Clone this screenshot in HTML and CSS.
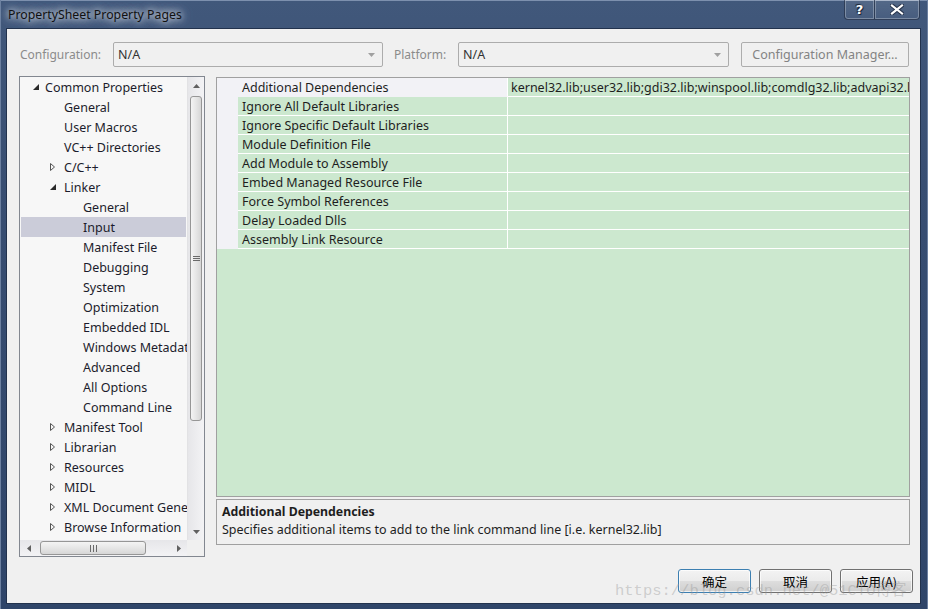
FILE: index.html
```html
<!DOCTYPE html>
<html>
<head>
<meta charset="utf-8">
<title>PropertySheet Property Pages</title>
<link rel="stylesheet" href="styles.css">
</head>
<body>
<div class="window">
  <div class="titlebar">
    <span class="title">PropertySheet Property Pages</span>
    <div class="caption-btns">
      <div class="cbtn help">?</div>
      <div class="cbtn close">
        <svg width="14" height="11" viewBox="0 0 14 11"><path d="M2 1.5 L12 9.5 M12 1.5 L2 9.5" stroke="#27344c" stroke-width="4.2" stroke-linecap="square"/><path d="M2 1.5 L12 9.5 M12 1.5 L2 9.5" stroke="#ffffff" stroke-width="2.2" stroke-linecap="square"/></svg>
      </div>
    </div>
  </div>
  <div class="client">
    <div class="config-row">
      <span class="lbl lbl-config">Configuration:</span>
      <div class="combo combo-config"><span class="combo-text">N/A</span><svg class="combo-arrow" width="7" height="4" viewBox="0 0 7 4"><path d="M0 0 H7 L3.5 4 Z" fill="#a0a0a0"/></svg></div>
      <span class="lbl lbl-platform">Platform:</span>
      <div class="combo combo-platform"><span class="combo-text">N/A</span><svg class="combo-arrow" width="7" height="4" viewBox="0 0 7 4"><path d="M0 0 H7 L3.5 4 Z" fill="#a0a0a0"/></svg></div>
      <div class="btn-mgr">Configuration Manager...</div>
    </div>

    <div class="main">
      <div class="tree">
        <div class="tree-items">
          <div class="trow d0"><span class="tw"><svg width="6" height="6" viewBox="0 0 6 6"><path d="M6 0 V6 H0 Z" fill="#2a2a2a"/></svg></span>Common Properties</div>
          <div class="trow d1n">General</div>
          <div class="trow d1n">User Macros</div>
          <div class="trow d1n">VC++ Directories</div>
          <div class="trow d1"><span class="tw"><svg width="5" height="8" viewBox="0 0 5 8"><path d="M0.5 0.5 L4.5 4 L0.5 7.5 Z" fill="none" stroke="#555" stroke-width="1"/></svg></span>C/C++</div>
          <div class="trow d1"><span class="tw"><svg width="6" height="6" viewBox="0 0 6 6"><path d="M6 0 V6 H0 Z" fill="#2a2a2a"/></svg></span>Linker</div>
          <div class="trow d2">General</div>
          <div class="trow d2 selected">Input</div>
          <div class="trow d2">Manifest File</div>
          <div class="trow d2">Debugging</div>
          <div class="trow d2">System</div>
          <div class="trow d2">Optimization</div>
          <div class="trow d2">Embedded IDL</div>
          <div class="trow d2">Windows Metadata</div>
          <div class="trow d2">Advanced</div>
          <div class="trow d2">All Options</div>
          <div class="trow d2">Command Line</div>
          <div class="trow d1"><span class="tw"><svg width="5" height="8" viewBox="0 0 5 8"><path d="M0.5 0.5 L4.5 4 L0.5 7.5 Z" fill="none" stroke="#555" stroke-width="1"/></svg></span>Manifest Tool</div>
          <div class="trow d1"><span class="tw"><svg width="5" height="8" viewBox="0 0 5 8"><path d="M0.5 0.5 L4.5 4 L0.5 7.5 Z" fill="none" stroke="#555" stroke-width="1"/></svg></span>Librarian</div>
          <div class="trow d1"><span class="tw"><svg width="5" height="8" viewBox="0 0 5 8"><path d="M0.5 0.5 L4.5 4 L0.5 7.5 Z" fill="none" stroke="#555" stroke-width="1"/></svg></span>Resources</div>
          <div class="trow d1"><span class="tw"><svg width="5" height="8" viewBox="0 0 5 8"><path d="M0.5 0.5 L4.5 4 L0.5 7.5 Z" fill="none" stroke="#555" stroke-width="1"/></svg></span>MIDL</div>
          <div class="trow d1"><span class="tw"><svg width="5" height="8" viewBox="0 0 5 8"><path d="M0.5 0.5 L4.5 4 L0.5 7.5 Z" fill="none" stroke="#555" stroke-width="1"/></svg></span>XML Document Generator</div>
          <div class="trow d1"><span class="tw"><svg width="5" height="8" viewBox="0 0 5 8"><path d="M0.5 0.5 L4.5 4 L0.5 7.5 Z" fill="none" stroke="#555" stroke-width="1"/></svg></span>Browse Information</div>
        </div>
        <div class="vscroll">
          <div class="sarrow"><svg width="7" height="4" viewBox="0 0 7 4"><path d="M3.5 0 L7 4 H0 Z" fill="#606060"/></svg></div>
          <div class="vthumb"><svg width="7" height="6" viewBox="0 0 7 6"><path d="M0 0.5 H7 M0 2.5 H7 M0 4.5 H7" stroke="#6a6a6a" stroke-width="1"/></svg></div>
          <div class="strack"></div>
          <div class="sarrow"><svg width="7" height="4" viewBox="0 0 7 4"><path d="M0 0 H7 L3.5 4 Z" fill="#606060"/></svg></div>
        </div>
        <div class="hscroll">
          <div class="harrow"><svg width="4" height="7" viewBox="0 0 4 7"><path d="M0 3.5 L4 0 V7 Z" fill="#606060"/></svg></div>
          <div class="hthumb"><svg width="7" height="7" viewBox="0 0 7 7"><path d="M0.5 0 V7 M3.5 0 V7 M6.5 0 V7" stroke="#6a6a6a" stroke-width="1"/></svg></div>
          <div class="strack"></div>
          <div class="harrow"><svg width="4" height="7" viewBox="0 0 4 7"><path d="M4 3.5 L0 0 V7 Z" fill="#606060"/></svg></div>
        </div>
        <div class="corner"></div>
      </div>

      <div class="right">
        <div class="grid">
          <div class="prow first"><div class="strip"></div><div class="pname">Additional Dependencies</div><div class="pval">kernel32.lib;user32.lib;gdi32.lib;winspool.lib;comdlg32.lib;advapi32.lib;shell32.lib;ole32.lib</div></div>
          <div class="prow"><div class="strip"></div><div class="pname">Ignore All Default Libraries</div><div class="pval"></div></div>
          <div class="prow"><div class="strip"></div><div class="pname">Ignore Specific Default Libraries</div><div class="pval"></div></div>
          <div class="prow"><div class="strip"></div><div class="pname">Module Definition File</div><div class="pval"></div></div>
          <div class="prow"><div class="strip"></div><div class="pname">Add Module to Assembly</div><div class="pval"></div></div>
          <div class="prow"><div class="strip"></div><div class="pname">Embed Managed Resource File</div><div class="pval"></div></div>
          <div class="prow"><div class="strip"></div><div class="pname">Force Symbol References</div><div class="pval"></div></div>
          <div class="prow"><div class="strip"></div><div class="pname">Delay Loaded Dlls</div><div class="pval"></div></div>
          <div class="prow"><div class="strip"></div><div class="pname">Assembly Link Resource</div><div class="pval"></div></div>
          <div class="gfill"></div>
        </div>
        <div class="desc">
          <div class="desc-title">Additional Dependencies</div>
          <div class="desc-text">Specifies additional items to add to the link command line [i.e. kernel32.lib]</div>
        </div>
      </div>
    </div>

    <div class="button-row">
      <div class="btn default">确定</div>
      <div class="btn">取消</div>
      <div class="btn">应用(A)</div>
    </div>
    <div class="watermark">https://blog.csdn.net/@51CTO博客</div>
  </div>
</div>
</body>
</html>
```

FILE: styles.css
```css
* { box-sizing: border-box; }
html, body { margin: 0; padding: 0; }
body {
  width: 928px;
  height: 609px;
  overflow: hidden;
  font-family: "Noto Sans", "Noto Sans CJK SC", sans-serif;
  font-size: 12.5px;
  color: #1e1e1e;
  background: #2d4266;
}

.window {
  width: 928px;
  height: 609px;
  display: flex;
  flex-direction: column;
  padding: 0 8px 6px 7px;
  background: linear-gradient(to bottom, #41587b 0%, #384e72 30%, #2f4569 100%);
  box-shadow: inset 1px 0 0 #6c80a0, inset -1px 0 0 #6c80a0, inset 0 1px 0 #7d90ae;
}

/* title bar */
.titlebar {
  height: 29px;
  display: flex;
  align-items: flex-start;
  flex-shrink: 0;
}
.title {
  margin-top: 6px;
  padding-left: 1px;
  font-size: 12.3px;
  line-height: 18px;
  color: #111;
  text-shadow: 0 0 6px rgba(230, 234, 242, 0.95), 0 0 10px rgba(220, 226, 236, 0.9), 0 0 14px rgba(210, 218, 230, 0.8);
}
.caption-btns {
  margin-left: auto;
  display: flex;
}
.cbtn {
  height: 20px;
  display: flex;
  align-items: center;
  justify-content: center;
  border: 1px solid rgba(20, 30, 50, 0.55);
  border-top: none;
  box-shadow: inset 0 0 0 1px rgba(255, 255, 255, 0.28);
  background: linear-gradient(to bottom, rgba(255,255,255,0.10), rgba(255,255,255,0.04));
}
.help {
  width: 30px;
  border-radius: 0 0 0 4px;
  border-right: none;
  font-family: "DejaVu Sans", sans-serif;
  font-weight: bold;
  font-size: 13px;
  color: #fff;
  text-shadow: 0 0 2px #1f2b40, 1px 1px 0 #1f2b40, -1px -1px 0 #1f2b40;
}
.close {
  width: 46px;
  border-radius: 0 0 4px 0;
}

/* client area */
.client {
  flex: 1;
  background: #f0f0f0;
  display: flex;
  flex-direction: column;
  position: relative;
  box-shadow: 0 0 0 1px #22324d;
}

.config-row {
  margin-top: 13px;
  height: 25px;
  display: flex;
  align-items: center;
  padding-left: 13px;
  flex-shrink: 0;
}
.lbl {
  font-size: 12px;
  color: #8b8b8b;
}
.lbl-config { width: 93px; }
.lbl-platform { width: 64px; margin-left: 11px; }
.combo {
  height: 25px;
  border: 1px solid #acacac;
  border-radius: 2px;
  background: #f0f0f0;
  display: flex;
  align-items: center;
  padding: 0 7px 0 4px;
}
.combo-config { width: 270px; }
.combo-platform { width: 271px; }
.combo-text { color: #333; flex: 1; }
.btn-mgr {
  margin-left: 12px;
  width: 168px;
  height: 25px;
  border: 1px solid #adadad;
  border-radius: 2px;
  display: flex;
  align-items: center;
  justify-content: center;
  color: #838383;
  font-size: 12.5px;
}

/* main */
.main {
  margin-top: 9px;
  height: 481px;
  display: flex;
  gap: 11px;
  padding-left: 12px;
  flex-shrink: 0;
}

.tree {
  width: 186px;
  height: 481px;
  border: 1px solid #828790;
  background: #f7f7f7;
  display: grid;
  grid-template-columns: 167px 17px;
  grid-template-rows: 463px 16px;
}
.tree-items {
  overflow: hidden;
  color: #1c1c2c;
}
.trow {
  height: 20px;
  display: flex;
  align-items: center;
  white-space: nowrap;
}
.tw {
  display: inline-flex;
  align-items: center;
  flex-shrink: 0;
}
.d0 { padding-left: 13px; }
.d0 .tw { width: 12px; }
.d1 { padding-left: 30px; }
.d1 .tw { width: 14px; }
.d1n { padding-left: 44px; }
.d2 { padding-left: 63px; }
.selected {
  background: #cbccd9;
  margin: 0 1px;
  padding-left: 62px;
}

.vscroll {
  display: flex;
  flex-direction: column;
  background: linear-gradient(to right, #e6e6e9, #f3f3f5);
  border-left: 1px solid #e2e2e4;
}
.sarrow {
  height: 17px;
  display: flex;
  align-items: center;
  justify-content: center;
  flex-shrink: 0;
}
.vthumb {
  margin: 2px 2px 0 2px;
  height: 325px;
  border: 1px solid #969696;
  border-radius: 3px;
  background: linear-gradient(to right, #f4f4f4, #e6e6e6 50%, #d6d6d6);
  display: flex;
  align-items: center;
  justify-content: center;
  flex-shrink: 0;
}
.strack { flex: 1; }
.hscroll {
  display: flex;
  background: linear-gradient(to bottom, #e6e6e9, #f3f3f5);
}
.harrow {
  width: 17px;
  display: flex;
  align-items: center;
  justify-content: center;
  flex-shrink: 0;
}
.hthumb {
  margin: 1px 0 1px 3px;
  width: 106px;
  border: 1px solid #969696;
  border-radius: 3px;
  background: linear-gradient(to bottom, #f4f4f4, #e6e6e6 50%, #d6d6d6);
  display: flex;
  align-items: center;
  justify-content: center;
  flex-shrink: 0;
}
.corner { background: #f0f0f0; }

/* right column */
.right {
  width: 694px;
  display: flex;
  flex-direction: column;
}
.grid {
  margin-top: 1px;
  height: 420px;
  border: 1px solid #a0a0a0;
  background: #cce8cf;
  display: flex;
  flex-direction: column;
  overflow: hidden;
}
.prow {
  height: 19px;
  display: flex;
  flex-shrink: 0;
}
.strip {
  width: 21px;
  background: #f2f2f6;
  flex-shrink: 0;
}
.pname {
  width: 270px;
  flex-shrink: 0;
  border-right: 1px solid #fff;
  border-bottom: 1px solid #fff;
  padding: 1px 0 0 4px;
  line-height: 17px;
  white-space: nowrap;
  overflow: hidden;
}
.first .pname { background: #f2f2f6; border-bottom-color: #f2f2f6; }
.pval {
  flex: 1;
  border-bottom: 1px solid #fff;
  padding: 1px 0 0 3px;
  line-height: 17px;
  white-space: nowrap;
  overflow: hidden;
}
.gfill { flex: 1; }

.desc {
  margin-top: 2px;
  height: 46px;
  border: 1px solid #a0a0a0;
  background: #f0f0f0;
  padding: 3px 5px 0 5px;
  line-height: 18px;
}
.desc-title { font-weight: bold; font-size: 12.3px; }

/* buttons */
.button-row {
  margin-top: 12px;
  display: flex;
  justify-content: flex-end;
  gap: 8px;
  padding-right: 7px;
}
.btn {
  width: 73px;
  height: 24px;
  border: 1px solid #707070;
  border-radius: 3px;
  background: linear-gradient(to bottom, #f3f3f3 0%, #ebebeb 48%, #dddddd 52%, #cfcfcf 100%);
  box-shadow: inset 0 0 0 1px rgba(255,255,255,0.7);
  display: flex;
  align-items: center;
  justify-content: center;
  font-family: "Noto Sans CJK SC", "Noto Sans", sans-serif;
  font-size: 12.5px;
  color: #000;
}
.btn.default { border-color: #3c7fb1; }

.watermark {
  position: absolute;
  left: 608px;
  top: 548px;
  font-family: "Liberation Mono", "Noto Sans CJK SC", monospace;
  font-size: 15.5px;
  color: rgba(150, 150, 150, 0.4);
  white-space: nowrap;
  pointer-events: none;
}
```
